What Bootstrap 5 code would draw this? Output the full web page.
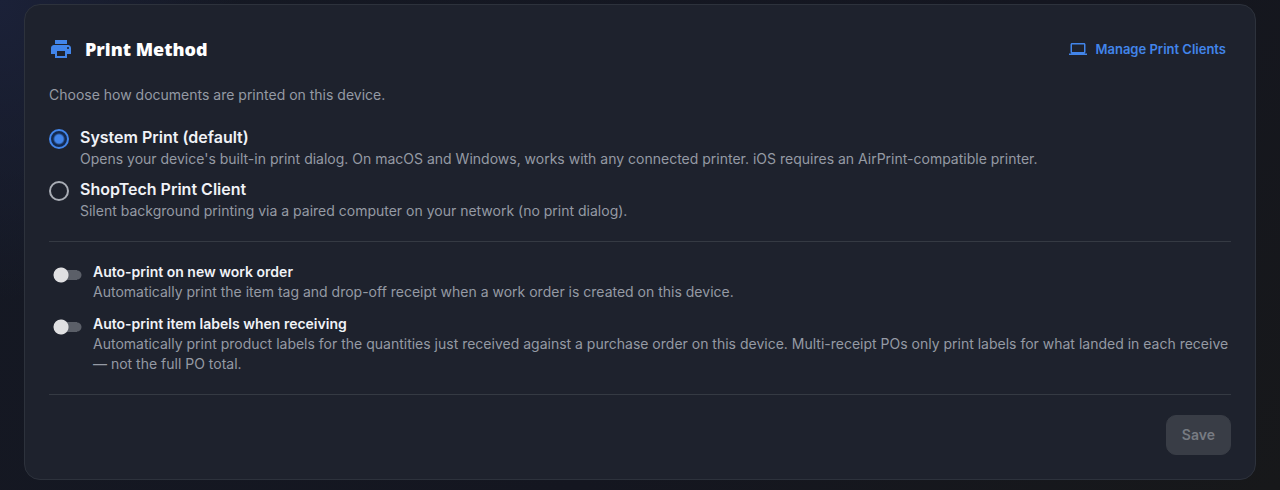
<!DOCTYPE html>
<html lang="en" data-bs-theme="dark">
<head>
<meta charset="utf-8">
<meta name="viewport" content="width=device-width, initial-scale=1">
<title>Print Method</title>
<link href="https://cdn.jsdelivr.net/npm/bootstrap@5.3.0/dist/css/bootstrap.min.css" rel="stylesheet">
<style>
  body {
    font-family: Inter, "Liberation Sans", sans-serif;
    font-size: 14px;
    line-height: 20px;
    color: #f0f2f7;
    min-height: 100vh;
    background: radial-gradient(ellipse 240px 300px at 0 0, #1b2138, transparent),
                linear-gradient(135deg, #151924 0%, #141620 60%, #17181a 100%);
  }
  .page { padding: 4px 24px 10px; }
  .panel {
    --bs-card-bg: #1e222d;
    --bs-card-border-color: #2d323c;
    --bs-card-border-radius: 16px;
    --bs-card-color: #f0f2f7;
  }
  .panel-body { padding: 24px; }
  .panel-head { height: 40px; }
  .panel-title { font: 800 18px/24px "Open Sans", sans-serif; color: #fff; }
  .accent { color: #4285ea; }
  .manage-link { font-size: 13px; font-weight: 600; padding-right: 5px; gap: 8px; }
  .muted { color: #959aa4; }
  .intro { margin: 16px 0 20px; }
  .setting-label { padding-left: 11px; }
  .option-title { font-size: 16px; line-height: 24px; font-weight: 600; }
  .toggle-title { font-weight: 600; }
  .rule { margin: 20px 0; border-color: #353a43; opacity: 1; }
  .option-radio.form-check-input {
    width: 20px; height: 20px; margin: 4px 0 0;
    background: transparent; border: 2px solid #a9adb5; box-shadow: none;
  }
  .option-radio.form-check-input:checked {
    border-color: #4285ea;
    background: radial-gradient(circle, #4285ea 4px, #142a50 6px);
  }
  .toggle {
    appearance: none; width: 29px; height: 16px; margin: 5px 0 0 4px; flex: none;
    background: radial-gradient(circle at 8px 8px, #e0e0e2 7px, transparent 8px),
                linear-gradient(#5b5f68, #5b5f68) 8px 3px / 16px 10px no-repeat,
                radial-gradient(circle at 24px 8px, #5b5f68 4px, transparent 5px);
    border-radius: 8px;
  }
  .toggle:checked { transform: scaleX(-1); }
  .save-btn {
    --bs-btn-disabled-bg: #393d46;
    --bs-btn-disabled-border-color: #393d46;
    --bs-btn-disabled-color: #777b82;
    --bs-btn-disabled-opacity: 1;
    --bs-btn-border-radius: 10px;
    --bs-btn-font-size: 14px;
    --bs-btn-font-weight: 600;
    --bs-btn-line-height: 20px;
    --bs-btn-padding-x: 15px;
    --bs-btn-padding-y: 9px;
  }
</style>
</head>
<body>
<main class="page">
  <section class="card panel">
    <form class="panel-body">
      <header class="panel-head d-flex align-items-center justify-content-between">
        <div class="d-flex align-items-center gap-2">
          <svg class="accent" width="24" height="24" viewBox="0 0 24 24" fill="currentColor" aria-hidden="true"><path d="M19 8H5c-1.660 0-3 1.340-3 3v6h4v4h12v-4h4v-6c0-1.660-1.340-3-3-3zm-3 11H8v-5h8v5zm3-7c-.55 0-1-.45-1-1s.45-1 1-1 1 .45 1 1-.45 1-1 1zm-1-9H6v4h12V3z"/></svg>
          <h2 class="panel-title mb-0 ms-1">Print Method</h2>
        </div>
        <a href="#" class="manage-link accent d-flex align-items-center text-decoration-none">
          <svg width="18" height="18" viewBox="0 0 24 24" fill="currentColor" aria-hidden="true"><path d="M20 18c1.100 0 1.990-.9 1.990-2L22 6c0-1.100-.9-2-2-2H4c-1.100 0-2 .9-2 2v10c0 1.100.9 2 2 2H0v2h24v-2h-4zM4 6h16v10H4V6z"/></svg>
          Manage Print Clients
        </a>
      </header>
      <p class="intro muted">Choose how documents are printed on this device.</p>

      <div class="d-flex flex-column gap-2">
        <div class="option d-flex">
          <input class="form-check-input option-radio flex-shrink-0" type="radio" name="method" id="system" checked>
          <label for="system" class="setting-label"><span class="option-title d-block">System Print (default)</span><span class="muted d-block">Opens your device's built-in print dialog. On macOS and Windows, works with any connected printer. iOS requires an AirPrint-compatible printer.</span></label>
        </div>
        <div class="option d-flex">
          <input class="form-check-input option-radio flex-shrink-0" type="radio" name="method" id="client">
          <label for="client" class="setting-label"><span class="option-title d-block">ShopTech Print Client</span><span class="muted d-block">Silent background printing via a paired computer on your network (no print dialog).</span></label>
        </div>
      </div>

      <hr class="rule">

      <div class="d-flex flex-column toggles">
        <div class="d-flex mb-2 pb-1">
          <input class="toggle" type="checkbox" role="switch" id="auto-order">
          <label for="auto-order" class="setting-label"><span class="toggle-title d-block">Auto-print on new work order</span><span class="muted d-block">Automatically print the item tag and drop-off receipt when a work order is created on this device.</span></label>
        </div>
        <div class="d-flex">
          <input class="toggle" type="checkbox" role="switch" id="auto-labels">
          <label for="auto-labels" class="setting-label"><span class="toggle-title d-block">Auto-print item labels when receiving</span><span class="muted d-block">Automatically print product labels for the quantities just received against a purchase order on this device. Multi-receipt POs only print labels for what landed in each receive — not the full PO total.</span></label>
        </div>
      </div>

      <hr class="rule">

      <div class="d-flex justify-content-end">
        <button type="submit" class="btn btn-secondary save-btn" disabled>Save</button>
      </div>
    </form>
  </section>
</main>
<script src="https://cdn.jsdelivr.net/npm/bootstrap@5.3.0/dist/js/bootstrap.bundle.min.js"></script>
</body>
</html>
